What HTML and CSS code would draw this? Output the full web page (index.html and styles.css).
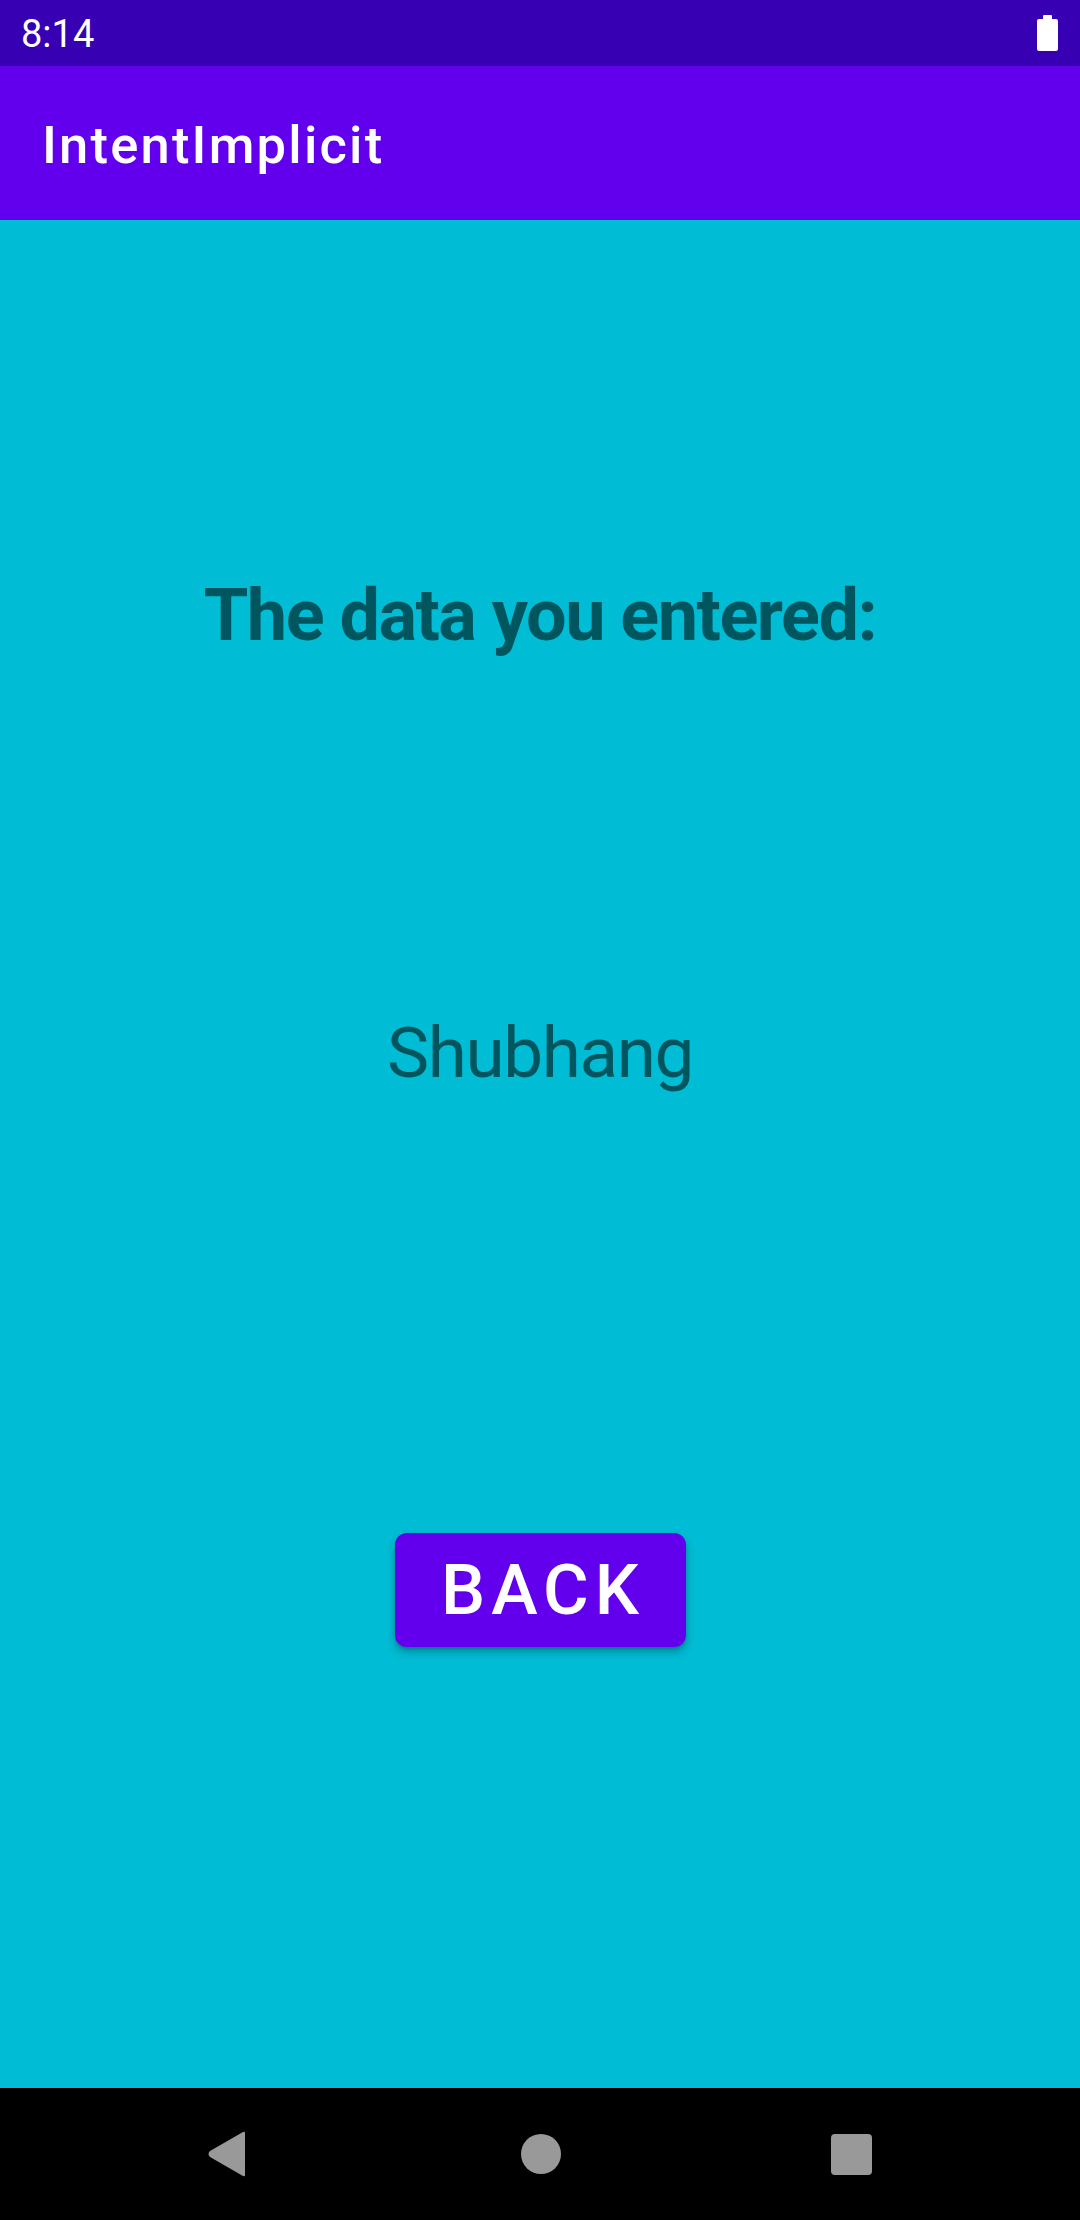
FILE: index.html
```html
<!DOCTYPE html>
<html>
<head>
<meta charset="utf-8">
<link rel="stylesheet" href="styles.css">
</head>
<body>
<div class="screen">
  <div class="status-bar">
    <span class="time">8:14</span>
    <svg class="battery" width="21" height="36" viewBox="0 0 21 36">
      <rect x="6" y="0" width="9" height="5" rx="1" fill="#fff"/>
      <rect x="0" y="4" width="21" height="32" rx="2" fill="#fff"/>
    </svg>
  </div>
  <div class="app-bar">
    <span class="title">IntentImplicit</span>
  </div>
  <main class="content">
    <h1 class="heading">The data you entered:</h1>
    <p class="value">Shubhang</p>
    <button class="back-btn">BACK</button>
  </main>
  <nav class="nav-bar">
    <svg class="nav-back" width="38" height="46" viewBox="0 0 38 46">
      <path d="M36 1 L3 20 Q0 23 3 26 L36 45 Q38 46 38 44 L38 2 Q38 0 36 1 Z" fill="#999"/>
    </svg>
    <span class="nav-home"></span>
    <span class="nav-recents"></span>
  </nav>
</div>
</body>
</html>
```
FILE: styles.css
```css
html, body {
  margin: 0;
  padding: 0;
}
body {
  font-family: Roboto, "Noto Sans", sans-serif;
  background: #000;
}
.screen {
  width: 1080px;
  height: 2220px;
  display: flex;
  flex-direction: column;
  background: #00BCD4;
}
.status-bar {
  height: 66px;
  background: #3700B3;
  display: flex;
  align-items: center;
  justify-content: space-between;
  padding: 0 22px 0 21px;
  box-sizing: border-box;
  flex-shrink: 0;
}
.time {
  color: #fff;
  font-size: 38px;
  line-height: 1;
  margin-top: 2px;
}
.battery {
  display: block;
}
.app-bar {
  height: 154px;
  background: #6200EE;
  display: flex;
  align-items: center;
  padding-left: 42px;
  box-sizing: border-box;
  flex-shrink: 0;
}
.title {
  color: #fff;
  font-size: 52.5px;
  font-weight: 500;
  letter-spacing: 2.2px;
  line-height: 1;
  margin-top: 4px;
}
.content {
  flex: 1;
  display: flex;
  flex-direction: column;
  align-items: center;
}
.heading {
  margin: 353px 0 0 0;
  font-size: 72px;
  line-height: 86px;
  font-weight: 700;
  letter-spacing: -1.5px;
  color: #00565F;
}
.value {
  margin: 351px 0 0 0;
  font-size: 71px;
  line-height: 86px;
  font-weight: 400;
  letter-spacing: -1.4px;
  color: #00565F;
}
.back-btn {
  margin-top: 437px;
  width: 291px;
  height: 114px;
  border: none;
  border-radius: 12px;
  background: #6200EE;
  color: #fff;
  font-family: Roboto, sans-serif;
  font-size: 70px;
  font-weight: 500;
  letter-spacing: 6px;
  padding: 0 0 0 6px;
  box-shadow: 0 5px 8px rgba(0,0,0,0.25), 0 2px 3px rgba(0,0,0,0.15);
}
.nav-bar {
  height: 132px;
  background: #000;
  display: flex;
  align-items: center;
  justify-content: center;
  flex-shrink: 0;
}
.nav-back {
  display: block;
  margin-left: -2px;
}
.nav-home {
  width: 40px;
  height: 40px;
  border-radius: 50%;
  background: #999;
  margin-left: 276px;
}
.nav-recents {
  width: 41px;
  height: 41px;
  border-radius: 4px;
  background: #999;
  margin-left: 270px;
}
```
